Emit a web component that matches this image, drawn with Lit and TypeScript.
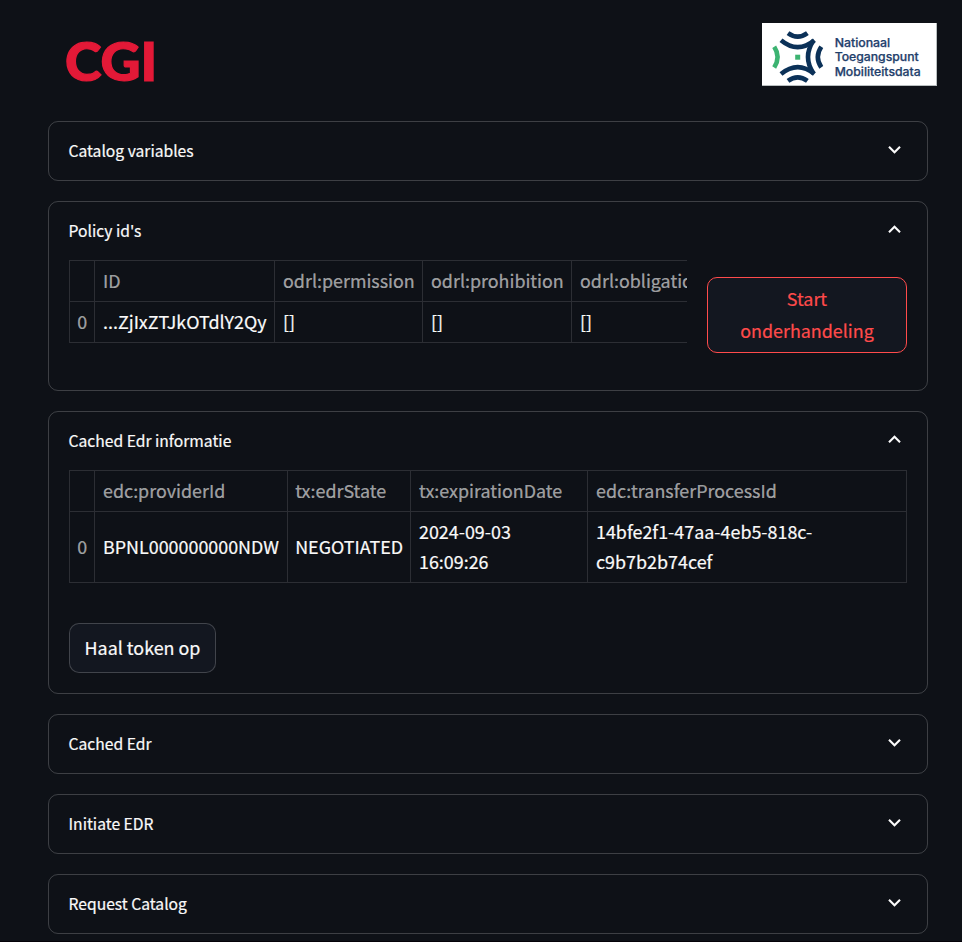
import { LitElement, html, css, svg, nothing } from "lit";
import { customElement, property } from "lit/decorators.js";

@customElement("expander-card")
class ExpanderCard extends LitElement {
  @property() heading = "";
  @property({ type: Boolean }) open = false;

  static styles = css`
    :host {
      display: block;
      box-sizing: border-box;
      border: 1px solid rgba(250, 250, 250, 0.2);
      border-radius: 10px;
    }
    .head {
      display: flex;
      align-items: center;
      justify-content: space-between;
      height: 58px;
      padding: 0 20px 0 19.5px;
      font-size: 15.67px;
      line-height: 28px;
      -webkit-text-stroke: 0.2px;
    }
    .icon {
      width: 25px;
      height: 25px;
      fill: #fafafa;
      margin-top: -3px;
    }
    .body {
      padding: 0 20px 20px;
    }
  `;

  render() {
    const d = this.open
      ? "M12 8l-6 6 1.41 1.41L12 10.83l4.59 4.58L18 14z"
      : "M16.59 8.59 12 13.17 7.41 8.59 6 10l6 6 6-6z";
    return html`
      <div class="head">
        <span>${this.heading}</span>
        <svg class="icon" viewBox="0 0 24 24">${svg`<path d=${d} />`}</svg>
      </div>
      ${this.open ? html`<div class="body"><slot></slot></div>` : nothing}
    `;
  }
}

@customElement("app-root")
class AppRoot extends LitElement {
  static styles = css`
    :host {
      display: block;
      box-sizing: border-box;
      height: 942px;
      overflow: hidden;
      border-bottom: 1px solid #050208;
      background: #0e1117;
      color: #fafafa;
      font-family: "Noto Sans CJK SC", "Noto Sans", sans-serif;
      font-size: 17.9px;
      -webkit-text-stroke: 0.2px;
    }
    .logos {
      display: flex;
      justify-content: space-between;
      align-items: flex-start;
      box-sizing: border-box;
      height: 121px;
      padding: 23px 25px 0 60px;
      -webkit-text-stroke: 0;
    }
    .cgi {
      width: 100px;
      height: 60px;
      margin-top: 14px;
      overflow: visible;
      fill: #e31937;
      stroke: #e31937;
      stroke-width: 1.2;
      font: 900 53px Lato, sans-serif;
    }
    .ntm {
      box-sizing: border-box;
      width: 175px;
      height: 63px;
      background: #fff;
      box-shadow: inset -1px -1px 0 #b9bfc0;
    }
    .arc {
      fill: none;
      stroke: #0b3158;
      stroke-width: 4.6;
    }
    .green {
      stroke: #3cb371;
    }
    .dot {
      fill: #3cb371;
    }
    .ntm-text {
      fill: #1f406b;
      stroke: #1f406b;
      stroke-width: 0.25;
      font: 500 11.3px Inter, sans-serif;
    }
    .cards {
      display: flex;
      flex-direction: column;
      gap: 20px;
      width: 880px;
      margin-left: 48px;
    }
    .policy {
      display: grid;
      grid-template-columns: 618px 200px;
      gap: 20px;
      height: 110px;
    }
    .clip {
      overflow: hidden;
    }
    .table {
      display: grid;
      box-sizing: border-box;
      border: solid rgba(250, 250, 250, 0.13);
      border-width: 0 1px 1px 0;
      line-height: 30px;
    }
    .t1 {
      grid-template-columns: 25px 180px 148px 149px 160px;
      grid-template-rows: 41px 41px;
      width: 663px;
    }
    .t2 {
      grid-template-columns: 25px 193px 123px 177px 319px;
      grid-template-rows: 41px 71px;
      width: 838px;
    }
    .cell {
      display: flex;
      align-items: center;
      box-sizing: border-box;
      padding: 0 0 2px 8px;
      border: solid rgba(250, 250, 250, 0.13);
      border-width: 1px 0 0 1px;
      white-space: nowrap;
    }
    .cell:nth-child(5n + 1),
    .t2 .cell:nth-child(5n + 3) {
      padding-left: 7.2px;
    }
    .dim {
      color: rgba(250, 250, 250, 0.6);
    }
    .btn {
      box-sizing: border-box;
      border: 1px solid rgba(250, 250, 250, 0.2);
      border-radius: 10px;
      background: #131720;
      color: inherit;
      font: inherit;
      line-height: 32px;
      padding: 0 0 2px;
      -webkit-text-stroke: 0.2px;
    }
    .primary {
      width: 200px;
      height: 76px;
      margin-top: 17px;
      padding: 0 20px 2px;
      border-color: #ff4b4b;
      color: #ff4b4b;
    }
    .token {
      display: block;
      width: 147px;
      height: 50px;
      margin-top: 40px;
    }
  `;

  private cell(text: unknown, dim = false) {
    return html`<div class="cell ${dim ? "dim" : ""}"><span>${text}</span></div>`;
  }

  render() {
    return html`
      <header class="logos">
        <svg class="cgi" viewBox="0 0 100 60">
          <text x="4.9" y="44" textLength="92.4" lengthAdjust="spacingAndGlyphs">CGI</text>
        </svg>
        <svg class="ntm" viewBox="0 0 175 63">
          <path class="arc" d="M26 10.2Q35.7 17.2 45.4 10.2" />
          <path class="arc" d="M19 17.2Q35.7 31 52.4 17.2" />
          <path class="arc" d="M19 51Q35.7 37.2 52.4 51" />
          <path class="arc" d="M26 57.8Q35.7 50.8 45.4 57.8" />
          <path class="arc" d="M51.5 17.5Q40.5 34 51.5 50.5" />
          <path class="arc" d="M59.3 23.8Q52.3 34 59.3 44.4" />
          <path class="arc green" d="M12.2 23.8Q19 34 12.2 44.4" />
          <rect class="dot" x="33.2" y="31.7" width="5" height="5" />
          <g class="ntm-text">
            <text x="72.7" y="24" textLength="55.5" lengthAdjust="spacingAndGlyphs">Nationaal</text>
            <text x="72.7" y="38.2" textLength="84" lengthAdjust="spacingAndGlyphs">Toegangspunt</text>
            <text x="72.7" y="52.5" textLength="86" lengthAdjust="spacingAndGlyphs">Mobiliteitsdata</text>
          </g>
        </svg>
      </header>
      <main class="cards">
        <expander-card heading="Catalog variables"></expander-card>
        <expander-card heading="Policy id's" open>
          <div class="policy">
            <div class="clip">
              <div class="table t1">
                ${["", "ID", "odrl:permission", "odrl:prohibition", "odrl:obligation"].map((t) => this.cell(t, true))}
                ${["0", "...ZjIxZTJkOTdlY2Qy", "[]", "[]", "[]"].map((t, i) => this.cell(t, i === 0))}
              </div>
            </div>
            <button class="btn primary">Start onderhandeling</button>
          </div>
        </expander-card>
        <expander-card heading="Cached Edr informatie" open>
          <div class="table t2">
            ${["", "edc:providerId", "tx:edrState", "tx:expirationDate", "edc:transferProcessId"].map((t) => this.cell(t, true))}
            ${this.cell("0", true)} ${this.cell("BPNL000000000NDW")} ${this.cell("NEGOTIATED")}
            ${this.cell(html`2024-09-03<br />16:09:26`)}
            ${this.cell(html`14bfe2f1-47aa-4eb5-818c-<br />c9b7b2b74cef`)}
          </div>
          <button class="btn token">Haal token op</button>
        </expander-card>
        <expander-card heading="Cached Edr"></expander-card>
        <expander-card heading="Initiate EDR"></expander-card>
        <expander-card heading="Request Catalog"></expander-card>
      </main>
    `;
  }
}
